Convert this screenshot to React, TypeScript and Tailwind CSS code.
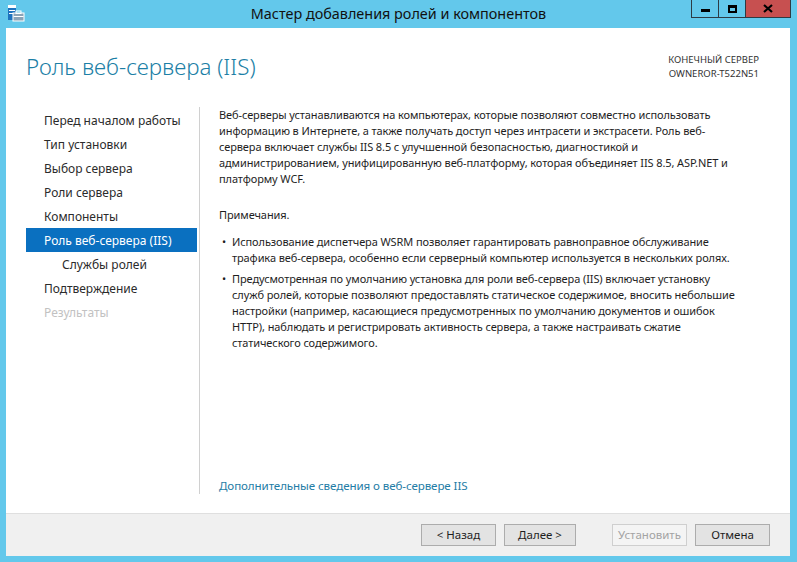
import React from "react";

const font = { fontFamily: '"Noto Sans", "Open Sans", sans-serif' };

function AppIcon() {
  return (
    <svg width="18" height="18" viewBox="0 0 18 18">
      <rect x="1" y="1" width="8" height="15" fill="#1e73be" />
      <rect x="1" y="1" width="8" height="3" fill="#ffffff" />
      <rect x="2" y="6" width="6" height="1" fill="#ffffff" />
      <rect x="2" y="9" width="6" height="1" fill="#ffffff" />
      <rect x="6" y="9" width="11" height="8" fill="#8aa4b8" stroke="#ffffff" strokeWidth="1" />
      <rect x="9" y="7" width="5" height="2.5" fill="none" stroke="#ffffff" strokeWidth="1" />
      <rect x="6.5" y="12" width="10" height="1" fill="#ffffff" />
    </svg>
  );
}

function WinControls() {
  return (
    <div className="flex h-[18px] self-start border border-t-0 border-[#2d3b44]">
      <div className="w-[27px] flex items-center justify-center border-r border-[#2d3b44]">
        <div className="w-[9px] h-[3px] bg-black mt-[3px]" />
      </div>
      <div className="w-[27px] flex items-center justify-center border-r border-[#2d3b44]">
        <div className="w-[9px] h-[8px] border-2 border-black border-t-[3px]" />
      </div>
      <div className="w-[44px] flex items-center justify-center bg-[#c75050]">
        <svg width="10" height="9" viewBox="0 0 10 9">
          <path d="M1 1 L9 8 M9 1 L1 8" stroke="#000" strokeWidth="2.2" />
        </svg>
      </div>
    </div>
  );
}

const steps: { label: string; state?: "active" | "disabled"; indent?: boolean }[] = [
  { label: "Перед началом работы" },
  { label: "Тип установки" },
  { label: "Выбор сервера" },
  { label: "Роли сервера" },
  { label: "Компоненты" },
  { label: "Роль веб-сервера (IIS)", state: "active" },
  { label: "Службы ролей", indent: true },
  { label: "Подтверждение" },
  { label: "Результаты", state: "disabled" },
];

function Btn({ children, disabled, w }: { children: React.ReactNode; disabled?: boolean; w?: string }) {
  return (
    <div
      className={
        (w ?? "w-[75px]") +
        " " +
        (disabled
          ? "h-[22px] flex items-center justify-center border border-[#cfcfcf] bg-[#f4f4f4] text-[#a3a3a3] text-[11.5px]"
          : "h-[22px] flex items-center justify-center border border-[#acacac] bg-[#e3e3e3] text-[#1e1e1e] text-[11.5px]")
      }
    >
      {children}
    </div>
  );
}

export default function App() {
  return (
    <div className="w-[797px] h-[562px] bg-[#63c8eb] flex flex-col" style={font}>
      {/* title bar */}
      <div className="h-[28px] grid grid-cols-[1fr_auto_1fr] items-start">
        <div className="pl-[7px] pt-[4px]">
          <AppIcon />
        </div>
        <div className="pt-[3px] text-[14.4px] leading-[22px] text-[#111]">Мастер добавления ролей и компонентов</div>
        <div className="flex justify-end pr-[6px]">
          <WinControls />
        </div>
      </div>

      {/* body */}
      <div className="ml-[6px] mr-[7px] mb-[6px] flex-1 flex flex-col bg-white">
        <div className="flex-1 flex flex-col">
          {/* header */}
          <div className="flex justify-between items-start pl-[20px] pr-[31px] pt-[23px] h-[79px]">
            <div className="text-[22.3px] font-light leading-[32px] text-[#1c7fa6]">Роль веб-сервера (IIS)</div>
            <div className="text-right text-[9.5px] leading-[14px] text-[#333] pt-[2px]">
              <div>КОНЕЧНЫЙ СЕРВЕР</div>
              <div>OWNEROR-T522N51</div>
            </div>
          </div>

          <div className="flex flex-1 pb-[19px]">
            {/* sidebar */}
            <div className="w-[194px] pl-[20px] pr-[2px] border-r border-[#d0d0d0]">
              <div className="flex flex-col pt-[1px]">
                {steps.map((s) => (
                  <div
                    key={s.label}
                    className={
                      (s.state === "active"
                        ? "bg-[#0a70c0] text-white "
                        : s.state === "disabled"
                        ? "text-[#c2c2c2] "
                        : "text-[#2b2b2b] ") +
                      (s.indent ? "pl-[36px] " : "pl-[18px] ") +
                      "h-[24px] flex items-center text-[12px] pt-[2px]"
                    }
                  >
                    {s.label}
                  </div>
                ))}
              </div>
            </div>

            {/* content */}
            <div className="flex-1 flex flex-col pl-[19px] pr-[10px] text-[11px] leading-[16px] tracking-[-0.1px] text-[#1e1e1e] whitespace-nowrap">
              <p>
                Веб-серверы устанавливаются на компьютерах, которые позволяют совместно использовать
                <br />
                информацию в Интернете, а также получать доступ через интрасети и экстрасети. Роль веб-
                <br />
                сервера включает службы IIS 8.5 с улучшенной безопасностью, диагностикой и
                <br />
                администрированием, унифицированную веб-платформу, которая объединяет IIS 8.5, ASP.NET и
                <br />
                платформу WCF.
              </p>
              <p className="mt-[20px]">Примечания.</p>
              <ul className="mt-[11px] flex flex-col gap-[5px]">
                <li className="flex">
                  <span className="w-[13px] pl-[3px] shrink-0">•</span>
                  <span>
                    Использование диспетчера WSRM позволяет гарантировать равноправное обслуживание
                    <br />
                    трафика веб-сервера, особенно если серверный компьютер используется в нескольких ролях.
                  </span>
                </li>
                <li className="flex">
                  <span className="w-[13px] pl-[3px] shrink-0">•</span>
                  <span>
                    Предусмотренная по умолчанию установка для роли веб-сервера (IIS) включает установку
                    <br />
                    служб ролей, которые позволяют предоставлять статическое содержимое, вносить небольшие
                    <br />
                    настройки (например, касающиеся предусмотренных по умолчанию документов и ошибок
                    <br />
                    HTTP), наблюдать и регистрировать активность сервера, а также настраивать сжатие
                    <br />
                    статического содержимого.
                  </span>
                </li>
              </ul>
              <div className="mt-auto text-[11.6px] text-[#1f7da6]">Дополнительные сведения о веб-сервере IIS</div>
            </div>
          </div>
        </div>

        {/* footer */}
        <div className="h-[43px] border-t border-[#dfdfdf] bg-[#f0f0f0] flex items-center justify-end pr-[20px] pb-[1px]">
          <div className="flex gap-[8px]">
            <Btn>&lt; Назад</Btn>
            <Btn w="w-[72px]">Далее &gt;</Btn>
          </div>
          <div className="flex gap-[8px] ml-[36px]">
            <Btn disabled>Установить</Btn>
            <Btn>Отмена</Btn>
          </div>
        </div>
      </div>
    </div>
  );
}
